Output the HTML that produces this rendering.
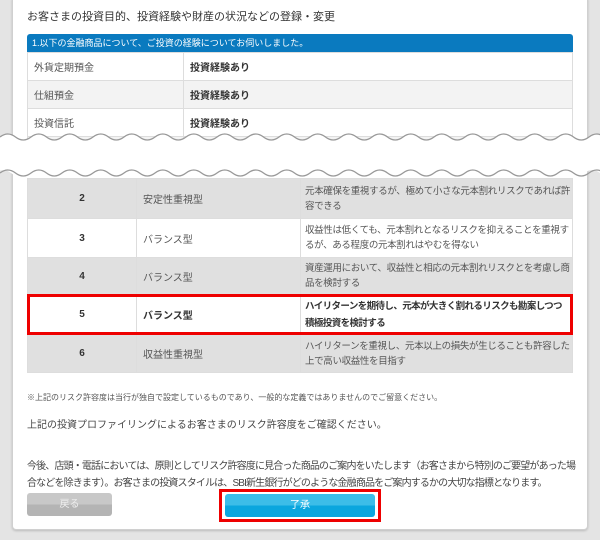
<!DOCTYPE html>
<html><head><meta charset="utf-8"><style>
*{margin:0;padding:0;box-sizing:border-box}
body{width:600px;height:540px;background:#e4e4e4;font-family:"Liberation Sans","Noto Sans CJK JP",sans-serif;position:relative;overflow:hidden;color:#333}
.card{position:absolute;left:12px;top:-4px;width:576px;height:534px;background:#fff;border:1px solid #d0d0d0;border-radius:4px;box-shadow:0 1px 2px #bbb}
.a{position:absolute}
.t{font-size:11px;white-space:nowrap}
table{border-collapse:collapse;position:absolute;left:27px;width:546px;table-layout:fixed}
td{border:1px solid #ddd;font-size:10px;color:#555;padding:0 6px}
td.d{padding:0 0 0 4px;font-size:9.5px;letter-spacing:-0.35px;line-height:15px;white-space:nowrap;overflow:hidden}
.g td{background:#e0e0e0}
</style></head><body>
<div class="card"></div>
<div class="a t" style="left:27px;top:8px;font-size:11px;color:#333">お客さまの投資目的、投資経験や財産の状況などの登録・変更</div>
<div class="a" style="left:27px;top:34px;width:546px;height:18px;background:#0a7abf;border-radius:3px 3px 0 0;color:#fff;font-size:9px;line-height:18px;padding-left:5px">1.以下の金融商品について、ご投資の経験についてお伺いしました。</div>
<table style="top:52px">
<tr style="height:28px"><td style="width:156px">外貨定期預金</td><td style="font-weight:bold;color:#333">投資経験あり</td></tr>
<tr style="height:28px;background:#f3f3f3"><td>仕組預金</td><td style="font-weight:bold;color:#333">投資経験あり</td></tr>
<tr style="height:28px"><td>投資信託</td><td style="font-weight:bold;color:#333">投資経験あり</td></tr>
<tr style="height:28px;background:#f3f3f3"><td>信用</td><td style="font-weight:bold;color:#333">投資経験あり</td></tr>
</table>
<table style="top:178px">
<tr class="g" style="height:40px"><td style="width:109px;text-align:center;font-weight:bold;color:#333">2</td><td style="width:164px">安定性重視型</td><td class="d">元本確保を重視するが、極めて小さな元本割れリスクであれば許<br>容できる</td></tr>
<tr style="height:39px"><td style="text-align:center;font-weight:bold;color:#333">3</td><td>バランス型</td><td class="d">収益性は低くても、元本割れとなるリスクを抑えることを重視す<br>るが、ある程度の元本割れはやむを得ない</td></tr>
<tr class="g" style="height:37px"><td style="text-align:center;font-weight:bold;color:#333">4</td><td>バランス型</td><td class="d">資産運用において、収益性と相応の元本割れリスクとを考慮し商<br>品を検討する</td></tr>
<tr style="height:40px"><td style="text-align:center;font-weight:bold;color:#333">5</td><td style="font-weight:bold;color:#333">バランス型</td><td class="d" style="line-height:17px;font-weight:bold;color:#333;letter-spacing:-0.6px">ハイリターンを期待し、元本が大きく割れるリスクも勘案しつつ<br>積極投資を検討する</td></tr>
<tr class="g" style="height:38px"><td style="text-align:center;font-weight:bold;color:#333">6</td><td>収益性重視型</td><td class="d">ハイリターンを重視し、元本以上の損失が生じることも許容した<br>上で高い収益性を目指す</td></tr>
</table>
<div class="a" style="left:27px;top:294px;width:546px;height:41px;border:3px solid #e00"></div>
<svg class="a" style="left:0;top:125px" width="600" height="65">
<path d="M0 12 q7.75 -6 15.5 0 t15.5 0 t15.5 0 t15.5 0 t15.5 0 t15.5 0 t15.5 0 t15.5 0 t15.5 0 t15.5 0 t15.5 0 t15.5 0 t15.5 0 t15.5 0 t15.5 0 t15.5 0 t15.5 0 t15.5 0 t15.5 0 t15.5 0 t15.5 0 t15.5 0 t15.5 0 t15.5 0 t15.5 0 t15.5 0 t15.5 0 t15.5 0 t15.5 0 t15.5 0 t15.5 0 t15.5 0 t15.5 0 t15.5 0 t15.5 0 t15.5 0 t15.5 0 t15.5 0 t15.5 0 L600 48 q-7.75 -6 -15.5 0 t-15.5 0 t-15.5 0 t-15.5 0 t-15.5 0 t-15.5 0 t-15.5 0 t-15.5 0 t-15.5 0 t-15.5 0 t-15.5 0 t-15.5 0 t-15.5 0 t-15.5 0 t-15.5 0 t-15.5 0 t-15.5 0 t-15.5 0 t-15.5 0 t-15.5 0 t-15.5 0 t-15.5 0 t-15.5 0 t-15.5 0 t-15.5 0 t-15.5 0 t-15.5 0 t-15.5 0 t-15.5 0 t-15.5 0 t-15.5 0 t-15.5 0 t-15.5 0 t-15.5 0 t-15.5 0 t-15.5 0 t-15.5 0 t-15.5 0 t-15.5 0 Z" fill="#fff"/>
<path d="M0 12 q7.75 -6 15.5 0 t15.5 0 t15.5 0 t15.5 0 t15.5 0 t15.5 0 t15.5 0 t15.5 0 t15.5 0 t15.5 0 t15.5 0 t15.5 0 t15.5 0 t15.5 0 t15.5 0 t15.5 0 t15.5 0 t15.5 0 t15.5 0 t15.5 0 t15.5 0 t15.5 0 t15.5 0 t15.5 0 t15.5 0 t15.5 0 t15.5 0 t15.5 0 t15.5 0 t15.5 0 t15.5 0 t15.5 0 t15.5 0 t15.5 0 t15.5 0 t15.5 0 t15.5 0 t15.5 0 t15.5 0" fill="none" stroke="#999" stroke-width="1.3"/>
<path d="M0 48 q7.75 -6 15.5 0 t15.5 0 t15.5 0 t15.5 0 t15.5 0 t15.5 0 t15.5 0 t15.5 0 t15.5 0 t15.5 0 t15.5 0 t15.5 0 t15.5 0 t15.5 0 t15.5 0 t15.5 0 t15.5 0 t15.5 0 t15.5 0 t15.5 0 t15.5 0 t15.5 0 t15.5 0 t15.5 0 t15.5 0 t15.5 0 t15.5 0 t15.5 0 t15.5 0 t15.5 0 t15.5 0 t15.5 0 t15.5 0 t15.5 0 t15.5 0 t15.5 0 t15.5 0 t15.5 0 t15.5 0" fill="none" stroke="#999" stroke-width="1.3"/>
</svg>
<div class="a t" style="left:27px;top:392px;font-size:8px;color:#555">※上記のリスク許容度は当行が独自で設定しているものであり、一般的な定義ではありませんのでご留意ください。</div>
<div class="a t" style="left:27px;top:416px;font-size:10px;color:#444">上記の投資プロファイリングによるお客さまのリスク許容度をご確認ください。</div>
<div class="a" style="left:27px;top:458px;font-size:10px;letter-spacing:-0.85px;line-height:17px;color:#444;white-space:nowrap">今後、店頭・電話においては、原則としてリスク許容度に見合った商品のご案内をいたします（お客さまから特別のご要望があった場<br>合などを除きます）。お客さまの投資スタイルは、SBI新生銀行がどのような金融商品をご案内するかの大切な指標となります。</div>
<div class="a" style="left:27px;top:493px;width:85px;height:23px;background:linear-gradient(#c8c8c8 50%,#b4b4b4 50%);border-radius:3px;color:#eee;font-size:10px;text-align:center;line-height:23px">戻る</div>
<div class="a" style="left:219px;top:489px;width:162px;height:33px;border:3px solid #e00"></div>
<div class="a" style="left:225px;top:494px;width:150px;height:23px;background:linear-gradient(#3cbde8 50%,#0aa6de 50%);border-radius:3px;color:#fff;font-size:10px;text-align:center;line-height:23px">了承</div>
</body></html>
